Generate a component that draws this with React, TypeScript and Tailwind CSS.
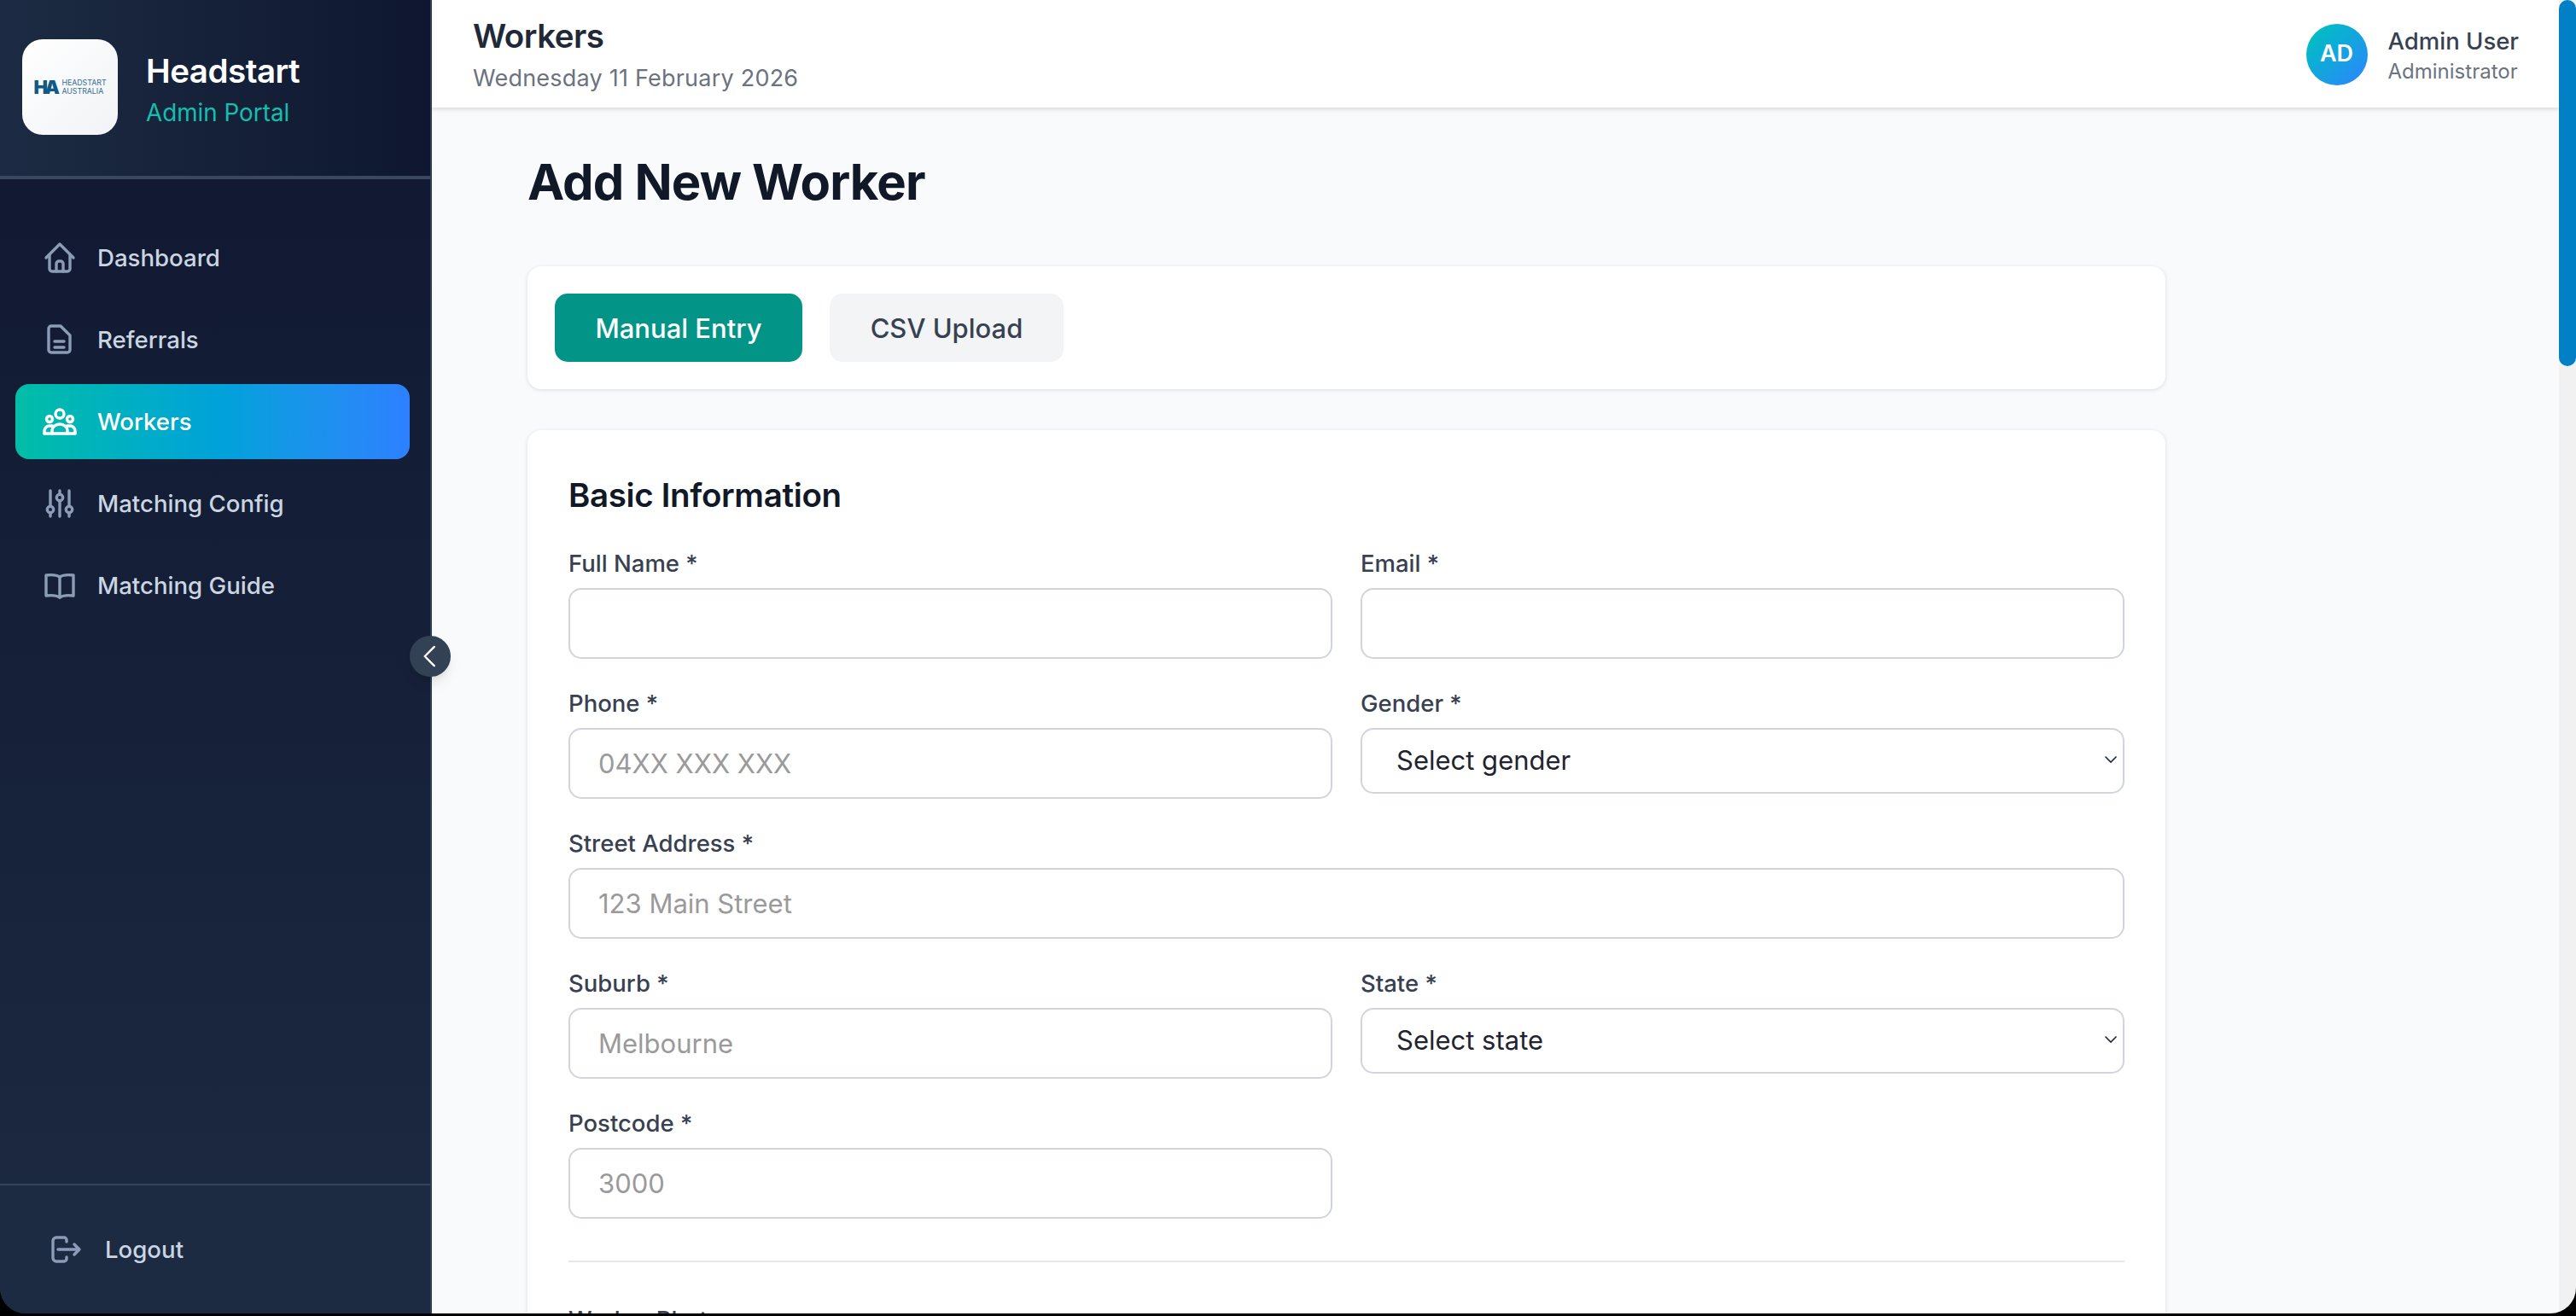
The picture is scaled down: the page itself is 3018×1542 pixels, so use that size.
import type { ReactNode } from "react";

const iconClass = "w-[44px] h-[44px] shrink-0 fill-none stroke-current stroke-[3.4] [stroke-linecap:round] [stroke-linejoin:round]";

function HomeIcon() {
  return (
    <svg viewBox="0 0 44 44" className={iconClass}>
      <path d="M6 22 L22 6 L38 22" />
      <path d="M10 19 V35 a3 3 0 0 0 3 3 H31 a3 3 0 0 0 3 -3 V19" />
      <path d="M18 38 V29 a3 3 0 0 1 3 -3 h2 a3 3 0 0 1 3 3 V38" />
    </svg>
  );
}

function DocIcon() {
  return (
    <svg viewBox="0 0 44 44" className={iconClass}>
      <path d="M12 6 H23 L34 17 V34 a3 3 0 0 1 -3 3 H12 a3 3 0 0 1 -3 -3 V9 a3 3 0 0 1 3 -3 Z" />
      <path d="M16 24 H27 M16 31 H27" />
    </svg>
  );
}

function PeopleIcon() {
  return (
    <svg viewBox="0 0 44 44" className={iconClass}>
      <circle cx="22" cy="13" r="5" />
      <circle cx="10" cy="19" r="3.5" />
      <circle cx="34" cy="19" r="3.5" />
      <path d="M4 36 H40" />
      <path d="M4 36 V33 a6 6 0 0 1 6 -6 h3.5" />
      <path d="M13 36 V33 a9 8 0 0 1 18 0 V36" />
      <path d="M40 36 V33 a6 6 0 0 0 -6 -6 h-3.5" />
    </svg>
  );
}

function SlidersIcon() {
  return (
    <svg viewBox="0 0 44 44" className={iconClass}>
      <path d="M11 7 V25 M11 33 V37 M22 7 V11 M22 19 V37 M33 7 V25 M33 33 V37" />
      <circle cx="11" cy="29" r="3.7" />
      <circle cx="22" cy="15" r="3.7" />
      <circle cx="33" cy="29" r="3.7" />
    </svg>
  );
}

function BookIcon() {
  return (
    <svg viewBox="0 0 44 44" className={iconClass}>
      <path d="M22 12 C19 10 14 9 6 10 V34 C14 33 19 34 22 36 C25 34 30 33 38 34 V10 C30 9 25 10 22 12 Z" />
      <path d="M22 12 V36" />
    </svg>
  );
}

function LogoutIcon() {
  return (
    <svg viewBox="0 0 44 44" className={iconClass}>
      <path d="M22 13 V11 a3 3 0 0 0 -3 -3 H10 a4 4 0 0 0 -4 4 V32 a4 4 0 0 0 4 4 h9 a3 3 0 0 0 3 -3 V31" />
      <path d="M12 22 H37 M31 16 L37 22 L31 28" />
    </svg>
  );
}

const navItems: { label: string; icon: ReactNode; active?: boolean }[] = [
  { label: "Dashboard", icon: <HomeIcon /> },
  { label: "Referrals", icon: <DocIcon /> },
  { label: "Workers", icon: <PeopleIcon />, active: true },
  { label: "Matching Config", icon: <SlidersIcon /> },
  { label: "Matching Guide", icon: <BookIcon /> },
];

function Sidebar() {
  return (
    <aside className="relative z-10 flex h-full w-[506px] shrink-0 flex-col border-r-2 border-[#334155] bg-linear-to-b from-[#0f172f] to-[#1c2a42]">
      <div className="flex h-[210px] shrink-0 items-start gap-[33px] border-b-4 border-[#38465f] bg-linear-to-r from-[#1c2b43] to-[#0f1730] pl-[26px] pt-[46px]">
        <div className="flex h-[112px] w-[112px] shrink-0 items-center justify-center gap-[6px] rounded-[24px] bg-linear-to-br from-white to-[#f1f3f6]">
          <span className="text-[22px] leading-none font-black tracking-[-3.5px] text-[#115a85]">HA</span>
          <span className="text-[8.8px] leading-[10px] text-[#2f6d94]">
            HEADSTART
            <br />
            AUSTRALIA
          </span>
        </div>
        <div className="flex flex-col pt-[12px]">
          <span className="text-[38.5px] leading-[50px] font-semibold tracking-[-0.5px] text-white">Headstart</span>
          <span className="mt-[5px] text-[27.8px] leading-[38px] text-[#14bfae]">Admin Portal</span>
        </div>
      </div>

      <nav className="flex flex-1 flex-col gap-2 pl-[18px] pr-[24px] pt-[48px]">
        {navItems.map((item) => (
          <a
            key={item.label}
            className={
              item.active
                ? "flex h-[88px] items-center gap-[22px] rounded-[16px] bg-linear-to-r from-[#04bda6] via-[#03a0dc] via-55% to-[#2d80ff] pl-[30px] text-[27.6px] font-medium text-white"
                : "flex h-[88px] items-center gap-[22px] rounded-[16px] pl-[30px] text-[27.6px] font-medium text-[#cbd5e1]"
            }
          >
            <span className={item.active ? "text-white" : "text-[#8c9cb6]"}>{item.icon}</span>
            <span className="pt-[2px]">{item.label}</span>
          </a>
        ))}
      </nav>

      <div className="flex h-[152px] shrink-0 items-center gap-[23px] border-t-2 border-[#344257] bg-[#1c2a42] pl-[56px] text-[27.6px] font-medium text-[#cbd5e1]">
        <span className="text-[#8c9cb6]">
          <LogoutIcon />
        </span>
        <span className="pt-[2px]">Logout</span>
      </div>

      <button className="absolute -right-[24px] top-[745px] flex h-[48px] w-[48px] items-center justify-center rounded-full bg-[#334155] text-white shadow-lg">
        <svg viewBox="0 0 24 24" className="h-[38px] w-[38px] fill-none stroke-current stroke-[1.5] [stroke-linecap:round] [stroke-linejoin:round]">
          <path d="M15 5 L8 12 L15 19" />
        </svg>
      </button>
    </aside>
  );
}

function Field({ label, className, children }: { label: string; className?: string; children: ReactNode }) {
  return (
    <div className={className}>
      <label className="mb-[9px] block text-[27.5px] leading-[39px] font-medium text-[#374151]">{label}</label>
      {children}
    </div>
  );
}

function TextInput({ placeholder }: { placeholder?: string }) {
  return (
    <input
      placeholder={placeholder}
      className="block h-[83px] w-full rounded-[15px] border-2 border-[#d1d5db] bg-white px-[33px] text-[31px] text-[#111827] placeholder:text-[#9a9a9a]"
    />
  );
}

function SelectInput({ value }: { value: string }) {
  return (
    <div className="relative">
      <select className="block h-[77px] w-full appearance-none rounded-[15px] border-2 border-[#d1d5db] bg-white pl-[40px] pr-[32px] text-[31px] text-[#1f2430]">
        <option>{value}</option>
      </select>
      <svg viewBox="0 0 16 10" className="pointer-events-none absolute right-[8px] top-[32px] h-[10px] w-[16px] fill-none stroke-[#1f2937] stroke-[1.6]">
        <path d="M1.5 1.5 L8 8 L14.5 1.5" />
      </svg>
    </div>
  );
}

function MainPane() {
  return (
    <main className="flex h-full min-w-0 flex-1 flex-col overflow-hidden bg-[#f9fafb]">
      <header className="flex h-[126px] shrink-0 items-start justify-between bg-white pl-[48px] pr-[47px] shadow-[0_2px_5px_rgba(0,0,0,0.14)]">
        <div className="flex flex-col pt-[16px]">
          <span className="text-[38.5px] leading-[52px] font-semibold tracking-[-0.5px] text-[#1f2937]">Workers</span>
          <span className="mt-[5px] text-[27px] leading-[38px] tracking-[0.22px] text-[#6b7280]">Wednesday 11 February 2026</span>
        </div>
        <div className="flex items-center gap-[24px] pt-[26px]">
          <div className="flex h-[72px] w-[72px] items-center justify-center rounded-full bg-linear-to-br from-[#06c4b8] to-[#2d80ff] text-[27px] font-semibold text-white">
            AD
          </div>
          <div className="mt-[3px] flex flex-col">
            <span className="text-[27.5px] leading-[38px] font-medium text-[#374151]">Admin User</span>
            <span className="text-[24px] leading-[34px] text-[#6b7280]">Administrator</span>
          </div>
        </div>
      </header>

      <div className="w-[2031px] shrink-0 pl-[112px] pt-[52px]">
        <h1 className="text-[58px] leading-[70px] font-bold tracking-[-0.85px] text-[#111827]">Add New Worker</h1>

        <div className="mt-[64px] flex gap-[32px] rounded-[16px] bg-white p-[32px] shadow-[0_1px_5px_rgba(0,0,0,0.12)]">
          <button className="h-[80px] w-[290px] rounded-[15px] bg-[#029587] pt-[2px] text-[31px] font-medium text-white">Manual Entry</button>
          <button className="h-[80px] w-[274px] rounded-[15px] bg-[#f3f4f6] pt-[2px] text-[31px] font-medium text-[#374151]">CSV Upload</button>
        </div>

        <div className="mt-[48px] rounded-[16px] bg-white pb-[48px] pl-[48px] pr-[48px] pt-[49px] shadow-[0_1px_5px_rgba(0,0,0,0.12)]">
          <h2 className="mb-[34px] text-[38.5px] leading-[54px] font-semibold tracking-[-0.35px] text-[#111827]">Basic Information</h2>
          <div className="grid grid-cols-2 gap-x-[33px] gap-y-[33px]">
            <Field label="Full Name *"><TextInput /></Field>
            <Field label="Email *"><TextInput /></Field>
            <Field label="Phone *"><TextInput placeholder="04XX XXX XXX" /></Field>
            <Field label="Gender *"><SelectInput value="Select gender" /></Field>
            <Field label="Street Address *" className="col-span-2"><TextInput placeholder="123 Main Street" /></Field>
            <Field label="Suburb *"><TextInput placeholder="Melbourne" /></Field>
            <Field label="State *"><SelectInput value="Select state" /></Field>
            <Field label="Postcode *"><TextInput placeholder="3000" /></Field>
          </div>
          <div className="mt-[49px] h-[2px] bg-[#e5e7eb]" />
          <Field label="Worker Photo" className="mt-[48px]"><TextInput /></Field>
        </div>
      </div>
    </main>
  );
}

export default function App() {
  return (
    <div className="h-screen w-screen overflow-hidden bg-black font-['Inter',sans-serif] antialiased">
      <div className="flex h-[1539px] w-full overflow-hidden rounded-b-[30px]">
        <Sidebar />
        <MainPane />
        {/* scrollbar is drawn since headless browsers hide the real one */}
        <div className="h-full w-[20px] shrink-0 bg-[#f1f1f1]">
          <div className="h-[429px] w-full rounded-[10px] bg-[#0280c6]" />
        </div>
      </div>
    </div>
  );
}
